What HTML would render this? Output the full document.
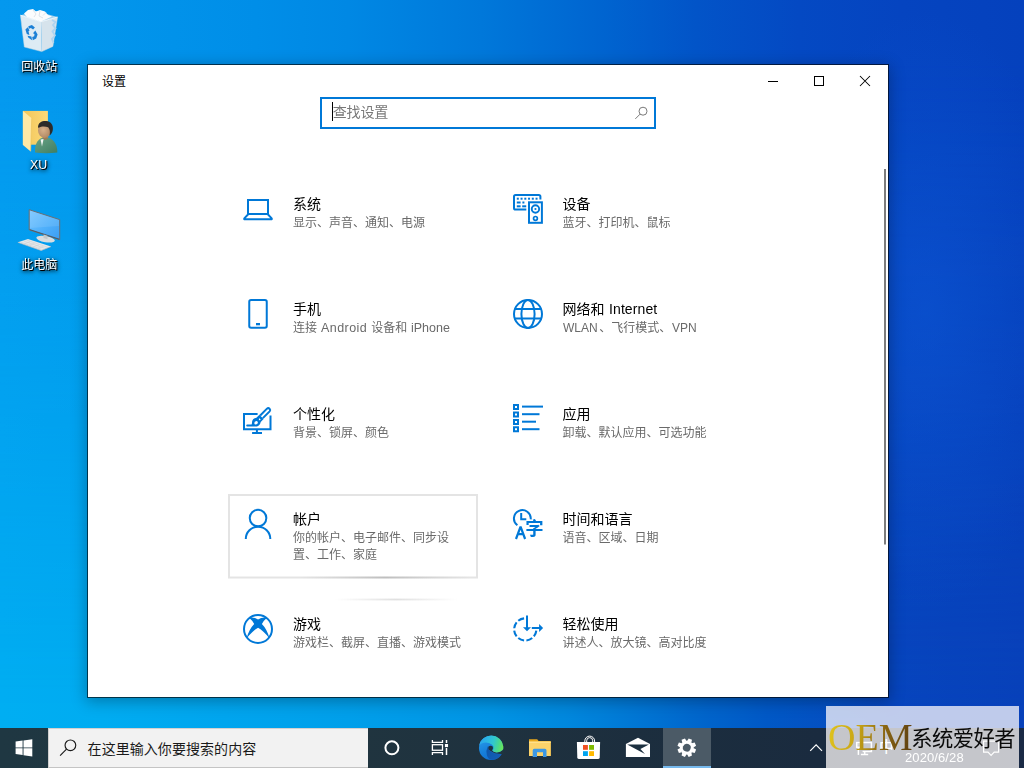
<!DOCTYPE html>
<html lang="zh-CN">
<head>
<meta charset="utf-8">
<title>设置</title>
<style>
html,body{margin:0;padding:0}
body{width:1024px;height:768px;overflow:hidden;position:relative;font-family:"Liberation Sans","Noto Sans CJK SC",sans-serif;background:#0667d0}
.a{position:absolute}
.t{position:absolute;display:block;line-height:1;white-space:nowrap;margin-top:.03em;font-family:"Liberation Sans","Noto Sans CJK SC",sans-serif}
.l{position:absolute;display:block;white-space:nowrap;will-change:transform}
svg{display:block}
#bg{left:0;top:0;width:1024px;height:768px;
 background:linear-gradient(to right,#00aef2 0,#00acf1 10%,#00a5ee 22%,#009fea 34%,#0094e4 48%,#0086dc 56%,#0074d3 63%,#0064cb 69%,#0058c6 75%,#0450c2 80.6%,#0745be 87%,#0841ba 100%)}
#bg2{left:0;top:0;width:1024px;height:768px;
 background:linear-gradient(to right,#0498ee 0,#0296ec 9%,#008ee8 25%,#0088e4 34%,#0078da 47%,#0064d0 59%,#0254c8 68%,#0449c3 78%,#0544c0 88%,#0541bd 100%);
 -webkit-mask-image:linear-gradient(to bottom,#000 0,#000 8%,rgba(0,0,0,.55) 50%,transparent 92%);mask-image:linear-gradient(to bottom,#000 0,#000 8%,rgba(0,0,0,.55) 50%,transparent 92%)}
#bg3{left:0;top:0;width:1024px;height:768px;background:radial-gradient(ellipse 150px 300px at 925px 310px,rgba(16,96,225,.38),rgba(16,96,225,0))}
#win{left:88px;top:65px;width:800px;height:632px;background:#fff;
 box-shadow:0 0 0 1px rgba(0,0,0,.62),0 3px 14px 2px rgba(0,0,0,.27)}
#tb{left:0;top:728px;width:1024px;height:40px;background:linear-gradient(to right,#1f3742 0,#20353f 30%,#1f323f 48%,#1c2e3e 62%,#1a2b3f 80%,#1a2a45 100%)}
#tbsearch{left:48px;top:728px;width:320px;height:40px;box-sizing:border-box;background:#f2f2f2;border-top:1px solid #d4d0d0;border-bottom:1px solid #c4c4c4;border-left:1px solid #cfcfcf}
#tbactive{left:663px;top:728px;width:48px;height:40px;background:#4b5a66;box-sizing:border-box;border-bottom:2px solid #76b9ed}
#wm1{left:826px;top:706px;width:193px;height:22px;background:rgba(237,238,248,.8)}
#wm2{left:826px;top:728px;width:193px;height:40px;background:rgba(240,238,238,.8)}
.oem{font-family:"Liberation Serif",serif;background:linear-gradient(100deg,#e2c61c 0,#c8a516 35%,#8a6612 65%,#5a3c10 100%);-webkit-background-clip:text;background-clip:text;color:transparent;-webkit-text-fill-color:transparent}

</style>
</head>
<body>
<div id="bg" class="a"></div><div id="bg2" class="a"></div><div id="bg3" class="a"></div>
<svg class="a" style="left:0;top:0" width="88" height="280" viewBox="0 0 88 280" aria-hidden="true">
<defs>
<linearGradient id="scr" x1="0" y1="0" x2="1" y2="1"><stop offset="0" stop-color="#79c6ff"/><stop offset=".55" stop-color="#4fb0fb"/><stop offset="1" stop-color="#3b9df2"/></linearGradient>
<linearGradient id="fold" x1="0" y1="0" x2="1" y2="0"><stop offset="0" stop-color="#f3c65a"/><stop offset="1" stop-color="#fbd978"/></linearGradient>
<radialGradient id="face" cx=".4" cy=".45" r=".7"><stop offset="0" stop-color="#d9b18a"/><stop offset="1" stop-color="#a9805c"/></radialGradient>
<linearGradient id="body" x1="0" y1="0" x2="1" y2="1"><stop offset="0" stop-color="#6aa486"/><stop offset="1" stop-color="#3f7d62"/></linearGradient>
</defs>
<!-- recycle bin -->
<g>
<path d="M20.4 15.2 L36.5 11.2 L57.6 17 L41 21.6 Z" fill="#dfe7ee" fill-opacity=".75"/>
<path d="M24 13.5 l4-3.5 5-1 3 2.5 4-1.5 5 1.5 3 3.5 4 1.5 -11 5 -14-4.5z" fill="#fbfcfd"/>
<path d="M33 10 l3 4 -2 3 M40 11 l-1 5 4 2 M46 12.5 l-3 3" stroke="#d3d9df" stroke-width=".7" fill="none"/>
<path d="M20.4 15.2 L41 21.6 L41.8 51.6 L24.3 47 Z" fill="#eef1f4" fill-opacity=".93"/>
<path d="M41 21.6 L57.6 17 L52.9 46.4 L41.8 51.6 Z" fill="#e3e8ec" fill-opacity=".94"/>
<path d="M52 20 l3.5 2 -2.5 3 2.5 3.5 -3 3 2.5 4 -3 3.5 1.5 4" stroke="#a9d2f2" stroke-width="1.8" fill="none" opacity=".9"/>
<path d="M20.4 15.2 L41 21.6 L57.6 17" stroke="#fff" stroke-width=".9" fill="none" opacity=".9"/>
<path d="M20.4 15.2 L24.3 47 L41.8 51.6 L52.9 46.4 L57.6 17" stroke="#c9d6e0" stroke-width=".6" fill="none" opacity=".8"/>
<g fill="#1c80d6">
<path d="M28.3 26.3 l3.6-1.3 3 2.6 -1.8 2 -2.2-1.7 -2 .9z"/>
<path d="M25.4 29.6 l2.4-2.4 1.7 3.2 -1 .8 .9 3.8 -2.6-1z"/>
<path d="M35.3 30.5 l2.3 3.9 -1.4 4.2 -3.4 1.6 -.6-3.2 2-.8 .3-2.3 -1.5-.6z"/>
<path d="M31.4 36.6 l.7 3.6 -3.6-2.4 -1-2.1z"/>
</g>
</g>
<!-- user folder -->
<g>
<path d="M22.9 110.9 H47.9 V144.7 H22.9 Z" fill="url(#fold)"/>
<path d="M22.9 110.9 L31.7 118.2 L30.7 151.4 L22.9 144.9 Z" fill="#ffe9a6"/>
<path d="M31.7 118.2 L30.7 151.4" stroke="#e9bf55" stroke-width=".6"/>
<path d="M35 152.5 C34.6 145 37 139.5 42.5 137.5 L48.5 137.5 C54 139.5 57.6 145 57.3 152.5 C50 153.6 42 153.6 35 152.5Z" fill="url(#body)"/>
<path d="M40.6 139.5 L43.6 139 L42 146.5 Z" fill="#f4f6f5"/>
<path d="M42.8 134 h5 v4.5 l-2.8 1.6 -2.2-1.6z" fill="#a07a58"/>
<ellipse cx="44.6" cy="130.6" rx="6.6" ry="7.4" fill="url(#face)"/>
<path d="M38 127.6 C38 122 42.6 120.6 46.4 121 C51 121.6 53.6 125.2 52.8 130 C52.4 132.6 51.2 134.4 49.6 135.4 C50.2 132 50 129.2 48.2 127.2 C45.4 126.4 41.6 126 38.6 127.8Z" fill="#2d2b29"/>
</g>
<!-- this pc -->
<g>
<path d="M29.2 209.7 L59.7 219.6 L59.7 239.7 L29.2 229.9 Z" fill="url(#scr)" stroke="#6b6f73" stroke-width="1" stroke-linejoin="round"/>
<path d="M29.6 229.5 L59.3 239.2" stroke="#4b4f53" stroke-width=".8"/>
<path d="M30 210.6 L59 220 L59 226 L30 228 Z" fill="#fff" opacity=".10"/>
<ellipse cx="45.6" cy="239.2" rx="9.4" ry="3" transform="rotate(10 45.6 239.2)" fill="#d9dde0"/>
<path d="M43.5 234.5 l4 1.3 v3.4 l-4-1.3z" fill="#c3c7ca"/>
<path d="M17.8 242.3 L28 239 L51 246.5 L41.2 250.5 Z" fill="#e4e7ea"/>
<path d="M17.8 242.3 L41.2 250.5 L51 246.5" stroke="#b9bec3" stroke-width=".7" fill="none"/>
<path d="M21 242.3 l20.5 7 M24 241.2 l20.5 7 M27 240.2 l20.5 7 M24.5 243.8 l5.5-2 M29 245.3 l5.5-2 M33.5 246.8 l5.5-2 M38 248.3 l5.5-2" stroke="#c9ced2" stroke-width=".5" fill="none"/>
</g>
</svg>
<span class="t " style="left:21.2px;top:60.6px;width:36.0px;height:12px;font-size:12px;color:#fff;filter:drop-shadow(1px 1px .7px rgba(0,0,0,1)) drop-shadow(.6px 1px 2px rgba(0,0,0,.7))">回收站</span>
<span class="l" style="left:30.2px;top:159.10px;font-size:12.4px;line-height:12.4px;color:#fff;filter:drop-shadow(1px 1px .7px rgba(0,0,0,1)) drop-shadow(.6px 1px 2px rgba(0,0,0,.7));">XU</span>
<span class="t " style="left:21.2px;top:258.3px;width:36.0px;height:12px;font-size:12px;color:#fff;filter:drop-shadow(1px 1px .7px rgba(0,0,0,1)) drop-shadow(.6px 1px 2px rgba(0,0,0,.7))">此电脑</span>
<div id="win" class="a"></div>
<span class="t " style="left:102px;top:75.6px;width:24.0px;height:12px;font-size:12px;color:#000">设置</span>
<svg class="a" style="left:0;top:0" width="1024" height="700" viewBox="0 0 1024 700" aria-hidden="true">
<g stroke="#000" stroke-width="1" fill="none">
<path d="M768 81.5H778"/>
<rect x="814.5" y="76.5" width="9" height="9"/>
<path d="M860 76L870 86M870 76L860 86" stroke-width="1.05"/>
</g>
<rect x="321" y="98" width="334" height="30" fill="#fff" stroke="#0078d7" stroke-width="2"/>
<path d="M332.5 102V121" stroke="#000" stroke-width="1"/>
<g stroke="#7a7a7a" stroke-width="1" fill="none"><circle cx="643" cy="111.2" r="4"/><path d="M640.1 114.1L635.3 118.9"/></g>
<rect x="884" y="169" width="2" height="375.5" fill="#7d7d7d"/>
<!-- hover box -->
<rect x="229" y="495" width="248" height="82.5" fill="none" stroke="#e4e4e4" stroke-width="2"/>
<linearGradient id="rv" x1="0" y1="0" x2="1" y2="0"><stop offset="0" stop-color="#bdbdbd" stop-opacity="0"/><stop offset=".5" stop-color="#b5b5b5" stop-opacity="1"/><stop offset="1" stop-color="#bdbdbd" stop-opacity="0"/></linearGradient>
<rect x="300" y="576.6" width="170" height="1.8" fill="url(#rv)" opacity=".8"/>
<linearGradient id="rv2" x1="0" y1="0" x2="1" y2="0"><stop offset="0" stop-color="#d8d8d8" stop-opacity="0"/><stop offset=".5" stop-color="#d8d8d8" stop-opacity="1"/><stop offset="1" stop-color="#d8d8d8" stop-opacity="0"/></linearGradient>
<rect x="335" y="598.6" width="122" height="1.8" fill="url(#rv2)" opacity=".8"/>

<!-- 1 system / laptop -->
<g stroke="#0078d7" stroke-width="2" fill="none" stroke-linejoin="round">
<rect x="248" y="200" width="20" height="14" stroke-linejoin="miter"/>
<path d="M248.2 214.3L244.3 218.4Q243.8 219.3 245 219.3H271Q272.2 219.3 271.7 218.4L267.8 214.3"/>
</g>
<!-- 2 devices -->
<g stroke="#0078d7" stroke-width="2" fill="none">
<path d="M526.3 209.6H515.6Q514 209.6 514 208V196.6Q514 195 515.6 195H538.8Q540.4 195 540.4 196.6V199.5"/>
<rect x="529" y="202.3" width="12.9" height="20.5"/>
<circle cx="535.45" cy="209" r="3.7" stroke-width="1.9"/>
<circle cx="535.45" cy="218.4" r="1.9" stroke-width="1.7"/>
</g>
<g fill="#0078d7">
<circle cx="535.45" cy="209" r="1.1"/>
<rect x="516.8" y="197.7" width="2" height="2"/><rect x="520.55" y="197.7" width="2" height="2"/><rect x="524.3" y="197.7" width="2" height="2"/><rect x="528.05" y="197.7" width="2" height="2"/><rect x="531.8" y="197.7" width="2" height="2"/><rect x="535.55" y="197.7" width="2" height="2"/>
<rect x="516.8" y="201.5" width="3.8" height="2"/><rect x="522.4" y="201.5" width="2" height="2"/>
<rect x="516.8" y="205.3" width="3.8" height="2"/><rect x="522.2" y="205.3" width="4" height="2"/>
</g>
<!-- 3 phone -->
<rect x="249.25" y="300" width="17.5" height="27.8" rx="1.8" fill="none" stroke="#0078d7" stroke-width="2"/>
<rect x="256" y="323" width="4" height="2.3" fill="#0078d7"/>
<!-- 4 globe -->
<g stroke="#0078d7" stroke-width="2" fill="none">
<circle cx="528" cy="314" r="14"/>
<ellipse cx="528" cy="314" rx="6.6" ry="14"/>
<path d="M514.8 309.1H541.2M514.8 318.6H541.2"/>
</g>
<!-- 5 personalization -->
<g stroke="#0078d7" stroke-width="2" fill="none">
<path d="M257.6 414H244V429.2H270.5V415.5"/>
<path d="M256.9 429.5V433M252.1 433H262" />
</g>
<path fill="#0078d7" d="M259.4 414.8L263.6 418.9L260.7 422Q260.2 425.3 257 426.4Q256.6 426.5 256 426.5H247.2A1 1 0 0 1 247.2 424.5H251.6Q252.1 423.6 252.1 421.6Q252.5 418.3 256.4 417.7Z"/>
<path fill="#fff" d="M254.3 423.2Q254.2 421.2 256.4 420.9Q257.8 420.8 257.9 422.4Q257.8 424.4 255.6 424.5Q254.4 424.5 254.3 423.2ZM259 418L260.9 419.9L258.9 420.2Z"/>
<path d="M260.16 415.46L266.96 408.66A1.9 1.9 0 0 1 269.64 411.34L262.84 418.14" stroke="#0078d7" stroke-width="2" fill="none"/>
<!-- 6 apps -->
<g fill="#0078d7">
<path fill-rule="evenodd" d="M513 404h6v6h-6zM515 406v2h2v-2z"/>
<path fill-rule="evenodd" d="M513 411.4h6v6h-6zM515 413.4v2h2v-2z"/>
<path fill-rule="evenodd" d="M513 418.9h6v6h-6zM515 420.9v2h2v-2z"/>
<path fill-rule="evenodd" d="M513 426.3h6v6h-6zM515 428.3v2h2v-2z"/>
<rect x="522" y="405.6" width="21" height="2"/><rect x="522" y="413.2" width="17.5" height="2"/><rect x="522" y="420.7" width="14" height="2"/><rect x="522" y="428.2" width="17.5" height="2"/>
</g>
<!-- 7 accounts -->
<g stroke="#0078d7" stroke-width="2" fill="none">
<circle cx="258.05" cy="518.05" r="8.3"/>
<path d="M245.8 538.9A12.25 12.25 0 0 1 270.3 538.9"/>
</g>
<!-- 8 time & language -->
<g stroke="#0078d7" stroke-width="2" fill="none">
<path d="M517.4 525.3A8.4 8.4 0 1 1 530.7 519.4"/>
<path d="M521.2 512.9V519.2H526.3"/>
<path d="M516 539L520.55 526.6L525.1 539M517.6 534.2H523.5" stroke-width="2.2" stroke-linejoin="bevel"/>
</g>
<!-- 9 gaming -->
<circle cx="258" cy="629" r="14" fill="none" stroke="#0078d7" stroke-width="2"/>
<path fill="#0078d7" d="M248.9 617.6Q254.5 616.8 258.06 619.4Q261.6 616.8 267.2 617.6Q263.8 620.6 261.9 623.9Q267 629 269.6 638.4Q263.5 630.9 258.06 627.7Q252.6 630.9 246.5 638.4Q249.1 629 254.2 623.9Q252.3 620.6 248.9 617.6Z"/>
<!-- 10 ease of access -->
<g stroke="#0078d7" stroke-width="2.1" fill="none">
<path d="M536.29 630.56A11.1 11.1 0 0 1 533.88 636.39M532.24 638.03A11.1 11.1 0 0 1 526.41 640.44M524.09 640.44A11.1 11.1 0 0 1 518.26 638.03M516.62 636.39A11.1 11.1 0 0 1 514.21 630.56M514.21 628.24A11.1 11.1 0 0 1 516.62 622.41M518.26 620.77A11.1 11.1 0 0 1 524.09 618.36"/>
<path d="M527 615.4V628M531.8 628H540" stroke-width="2"/>
</g>
<path fill="#0078d7" d="M523 627.2H531L527 631.2ZM539.1 624.1L543.1 628L539.1 631.9Z"/>
</svg>
<span class="t " style="left:525.2px;top:519.4px;width:18.4px;height:18.4px;font-size:18.4px;color:#0078d7;font-weight:700">字</span>
<span class="t " style="left:332.8px;top:104.9px;width:55.2px;height:14.1px;font-size:14.1px;color:#787878;letter-spacing:-.021em">查找设置</span>
<span class="t " style="left:293px;top:196.8px;width:28.0px;height:14px;font-size:14px;color:#000">系统</span>
<span class="t " style="left:293px;top:216.8px;width:132.0px;height:12px;font-size:12px;color:#6a6a6a">显示、声音、通知、电源</span>
<span class="t " style="left:562.6px;top:196.8px;width:28.0px;height:14px;font-size:14px;color:#000">设备</span>
<span class="t " style="left:562.6px;top:216.8px;width:108.0px;height:12px;font-size:12px;color:#6a6a6a">蓝牙、打印机、鼠标</span>
<span class="t " style="left:293px;top:301.8px;width:28.0px;height:14px;font-size:14px;color:#000">手机</span>
<span class="t " style="left:293px;top:321.8px;width:24.0px;height:12px;font-size:12px;color:#6a6a6a">连接</span>
<span class="l" style="left:320.8px;top:321.62px;font-size:12.5px;line-height:12.5px;color:#6a6a6a;letter-spacing:.45px;">Android</span>
<span class="t " style="left:371.3px;top:321.8px;width:36.0px;height:12px;font-size:12px;color:#6a6a6a">设备和</span>
<span class="l" style="left:410.8px;top:321.62px;font-size:12.5px;line-height:12.5px;color:#6a6a6a;">iPhone</span>
<span class="t " style="left:562.6px;top:301.8px;width:42.0px;height:14px;font-size:14px;color:#000">网络和</span>
<span class="l" style="left:608.6px;top:302.35px;font-size:14px;line-height:14px;color:#000;letter-spacing:.1px;">Internet</span>
<span class="l" style="left:563.2px;top:322.04px;font-size:12px;line-height:12px;color:#6a6a6a;">WLAN</span>
<span class="t " style="left:599.2px;top:321.8px;width:72.0px;height:12px;font-size:12px;color:#6a6a6a">、飞行模式、</span>
<span class="l" style="left:671.6px;top:322.04px;font-size:12px;line-height:12px;color:#6a6a6a;">VPN</span>
<span class="t " style="left:293px;top:406.8px;width:42.0px;height:14px;font-size:14px;color:#000">个性化</span>
<span class="t " style="left:293px;top:426.8px;width:96.0px;height:12px;font-size:12px;color:#6a6a6a">背景、锁屏、颜色</span>
<span class="t " style="left:562.6px;top:406.8px;width:28.0px;height:14px;font-size:14px;color:#000">应用</span>
<span class="t " style="left:562.6px;top:426.8px;width:144.0px;height:12px;font-size:12px;color:#6a6a6a">卸载、默认应用、可选功能</span>
<span class="t " style="left:293px;top:511.8px;width:28.0px;height:14px;font-size:14px;color:#000">帐户</span>
<span class="t " style="left:293px;top:531.8px;width:156.0px;height:12px;font-size:12px;color:#6a6a6a">你的帐户、电子邮件、同步设</span>
<span class="t " style="left:293px;top:548.3px;width:84.0px;height:12px;font-size:12px;color:#6a6a6a">置、工作、家庭</span>
<span class="t " style="left:562.6px;top:511.8px;width:70.0px;height:14px;font-size:14px;color:#000">时间和语言</span>
<span class="t " style="left:562.6px;top:531.8px;width:96.0px;height:12px;font-size:12px;color:#6a6a6a">语音、区域、日期</span>
<span class="t " style="left:293px;top:616.8px;width:28.0px;height:14px;font-size:14px;color:#000">游戏</span>
<span class="t " style="left:293px;top:636.8px;width:168.0px;height:12px;font-size:12px;color:#6a6a6a">游戏栏、截屏、直播、游戏模式</span>
<span class="t " style="left:562.6px;top:616.8px;width:56.0px;height:14px;font-size:14px;color:#000">轻松使用</span>
<span class="t " style="left:562.6px;top:636.8px;width:144.0px;height:12px;font-size:12px;color:#6a6a6a">讲述人、放大镜、高对比度</span>
<div id="tb" class="a"></div>
<div id="tbsearch" class="a"></div>
<div id="tbactive" class="a"></div>
<svg class="a" style="left:0;top:728px" width="1024" height="40" viewBox="0 728 1024 40" aria-hidden="true">
<defs>
<linearGradient id="eg2" gradientUnits="userSpaceOnUse" x1="479" y1="742" x2="503.5" y2="749"><stop offset="0" stop-color="#29a3ec"/><stop offset=".32" stop-color="#2cb8e2"/><stop offset=".55" stop-color="#31c8cc"/><stop offset=".78" stop-color="#4bd98a"/><stop offset="1" stop-color="#72ea4e"/></linearGradient>
<linearGradient id="eg3" gradientUnits="userSpaceOnUse" x1="482" y1="740" x2="492" y2="760"><stop offset="0" stop-color="#2596e6"/><stop offset=".5" stop-color="#1780da"/><stop offset="1" stop-color="#0f6fd2"/></linearGradient>
<linearGradient id="eg4" gradientUnits="userSpaceOnUse" x1="486" y1="748" x2="501" y2="757"><stop offset="0" stop-color="#0e56ab"/><stop offset="1" stop-color="#135fb6"/></linearGradient>
</defs>
<!-- start -->
<g fill="#fff">
<path d="M15.6 741.6L22.6 740.6V747.4H15.6Z"/>
<path d="M23.5 740.5L32.3 739.3V747.4H23.5Z"/>
<path d="M15.6 748.3H22.6V755.1L15.6 754.1Z"/>
<path d="M23.5 748.3H32.3V756.4L23.5 755.2Z"/>
</g>
<!-- search magnifier -->
<g stroke="#1a1a1a" stroke-width="1.15" fill="none"><circle cx="70.4" cy="745.3" r="5.35"/><path d="M66.5 749.2L60.1 755.7"/></g>
<!-- cortana -->
<circle cx="391.9" cy="747.8" r="6.5" fill="none" stroke="#fff" stroke-width="2"/>
<!-- task view -->
<g stroke="#fff" stroke-width="1.3" fill="none">
<path d="M432.4 739.9V742.3H442.5V739.9M432.4 755.1V752.65H442.5V755.1"/>
<rect x="432.4" y="744.7" width="10.1" height="5.55"/>
<path d="M446.5 739.9V742.9M446.5 748V755.1" stroke-width="1.5"/>
</g>
<rect x="444.9" y="744" width="3.15" height="3.1" fill="#fff"/>
<!-- edge -->
<g>
<circle cx="491.1" cy="747.9" r="12.15" fill="url(#eg3)"/>
<path d="M489.58 748.67L492.29 750.33L493.33 751.58L496.67 752.42L500.00 752.00L502.50 749.92L504.58 750.33L504.58 754.71L501.25 754.08L498.33 753.75L495.00 753.50L492.08 752.00L489.58 750.33Z" fill="#20343f"/>
<path d="M487.71 746.58Q485.62 750.75 486.88 755.33Q487.50 757.83 489.38 759.29Q494.17 760.75 498.33 758.04Q500.42 756.58 501.33 754.29Q498.33 754.00 495.00 753.58Q491.67 752.42 489.58 750.33Q488.42 748.67 488.75 746.58Z" fill="url(#eg4)"/>
<path d="M479.17 745.75A12.2 12.2 0 0 1 503.33 746.38Q503.67 748.67 502.29 750.33Q500.42 752.42 496.67 752.50Q493.75 752.33 492.29 750.42Q493.96 748.88 493.42 746.38Q492.50 744.08 488.96 742.92Q485.42 741.92 482.08 743.17Q480.21 744.08 479.17 745.75Z" fill="url(#eg2)"/>
<circle cx="490.65" cy="748.1" r="2.35" fill="#1e323e"/>
</g>
<!-- explorer -->
<g>
<path d="M529 739.2H537.2L538.6 741H550.7V756H529Z" fill="#e9a81c"/>
<path d="M529 741.6H550.7V756H529Z" fill="#fcd36a"/>
<path d="M529 741.6H550.7V743H529Z" fill="#ffe08a"/>
<path d="M532.7 756.9V750.4Q532.7 748.8 534.3 748.8H544.9Q546.5 748.8 546.5 750.4V756.9H543V752.2H537V756.9Z" fill="#3c98e4"/>
</g>
<!-- store -->
<g>
<path d="M586.7 742.2V740.6A3 3 0 0 1 592.7 740.6V742.2M584.8 742.2V741A4.9 4.9 0 0 1 594.6 741V742.2" stroke="#fff" stroke-width="1" fill="none"/>
<path d="M576.9 741.9H600.1L599.7 757.4Q599.6 759.1 597.9 759.1H579.1Q577.4 759.1 577.3 757.4Z" fill="#fff"/>
<rect x="583" y="745" width="4.9" height="4.8" fill="#f25022"/>
<rect x="589.1" y="745" width="4.9" height="4.8" fill="#7fba00"/>
<rect x="583" y="751.2" width="4.9" height="4.8" fill="#00a4ef"/>
<rect x="589.1" y="751.2" width="4.9" height="4.8" fill="#ffb900"/>
</g>
<!-- mail -->
<g>
<path d="M625.9 743.9L638 737.8L650 743.9V756.9H625.9Z" fill="#fff"/>
<path d="M627.2 744.5H648.9L640.4 749L645 753.9Z" fill="#1c3040"/>
</g>
<!-- settings gear -->
<g transform="translate(686.8 747.7) rotate(22.5)">
<g fill="#fff">
<circle r="6.9"/>
<g id="tooth"><path d="M-2.3 -6.2L-1.8 -9.3H1.8L2.3 -6.2Z"/></g>
<use href="#tooth" transform="rotate(45)"/><use href="#tooth" transform="rotate(90)"/><use href="#tooth" transform="rotate(135)"/>
<use href="#tooth" transform="rotate(180)"/><use href="#tooth" transform="rotate(225)"/><use href="#tooth" transform="rotate(270)"/><use href="#tooth" transform="rotate(315)"/>
</g>
<circle r="3.9" fill="#4b5a66"/>
</g>
<!-- tray -->
<g stroke="#fff" fill="none" stroke-width="1.2">
<path d="M810.2 750.8L816.1 744.9L822 750.8"/>
</g>
</svg>
<span class="t " style="left:87.6px;top:741.4px;width:168.6px;height:14px;font-size:14px;color:#1a1a1a;letter-spacing:.004em">在这里输入你要搜索的内容</span>
<div id="wm1" class="a"></div><div id="wm2" class="a"></div>
<svg class="a" style="left:840px;top:728px" width="184" height="40" viewBox="840 728 184 40" aria-hidden="true">
<g stroke="#fff" fill="none" stroke-width="1.5">
<path d="M862 742.6H871.4V751.4H862.6"/>
<path d="M864.7 751.4V754.3M860.9 754.4H868.2"/>
<rect x="856.7" y="742.6" width="4.6" height="4.6"/>
<path d="M858.4 747.2V754.9"/>
<path d="M858 744.3v1.2M859.9 744.3v1.2" stroke-width=".8"/>
<path d="M983.6 741.2H998.6V752.2H994.2L991.1 755.3L988 752.2H983.6Z" stroke-width="1.2"/>
</g>
</svg>
<span class="t " style="left:878.9px;top:739.9px;width:14.6px;height:14.6px;font-size:14.6px;color:#fff;font-weight:500">中</span>
<span class="l" style="left:905.3px;top:751.20px;font-size:13px;line-height:13px;color:#fff;letter-spacing:.1px;">2020/6/28</span>
<span class="l oem" style="left:827.5px;top:717.6px;font-size:38px;line-height:38px">OEM</span>
<span class="t " style="left:911.2px;top:728.0px;width:103.8px;height:21.3px;font-size:21.3px;color:#0a0a0a;letter-spacing:-.026em">系统爱好者</span>
</body>
</html>
